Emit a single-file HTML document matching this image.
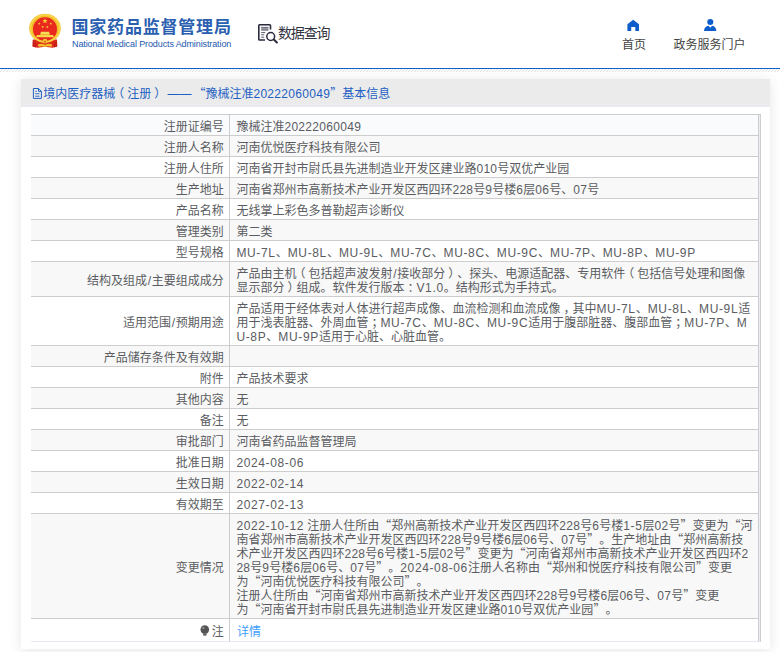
<!DOCTYPE html>
<html lang="zh-CN">
<head>
<meta charset="utf-8">
<title>国家药品监督管理局 数据查询</title>
<style>
*{box-sizing:border-box;margin:0;padding:0}
html,body{width:780px;height:652px;overflow:hidden;background:#fff}
body{text-spacing-trim:space-all;font-family:"Liberation Sans","Noto Sans CJK SC",sans-serif;font-size:12px;color:#444;position:relative}
.q{font-family:"Noto Sans CJK SC",sans-serif;line-height:0}
.hdr{position:absolute;left:0;top:0;width:780px;height:68px;background:#fff}
.blue{position:absolute;left:0;top:67.6px;width:780px;height:1.7px;background:#0f5fc4}
.hatch{position:absolute;left:0;top:69.4px;width:780px;height:3px}
.emblem{position:absolute;left:28px;top:12px;width:34px;height:37px}
.t1{position:absolute;left:71.5px;top:14.5px;font-size:17px;line-height:26px;font-weight:bold;color:#2b5fb0;white-space:nowrap;letter-spacing:.8px}
.t2{position:absolute;left:72px;top:38px;font-size:9px;line-height:12px;color:#2258ae;white-space:nowrap;letter-spacing:-.11px}
.sq{position:absolute;left:257px;top:23px;width:22px;height:21px}
.sqt{position:absolute;left:278px;top:21.5px;font-size:14px;line-height:22px;color:#33333f;white-space:nowrap;letter-spacing:-1.15px}
.nav{position:absolute;top:38.3px;font-size:12px;line-height:14px;color:#444;white-space:nowrap;text-align:center}
.ico{position:absolute}
.card{position:absolute;left:21px;top:79px;width:749px;height:570px;background:#fff;box-shadow:0 2px 12px 0 rgba(0,0,0,.1)}
.ch{position:absolute;left:0;top:0;width:749px;height:28px;background:#ebebeb;border-bottom:1px solid #e8ebf5}
.cht{position:absolute;left:22.3px;top:6.6px;font-size:12px;line-height:16px;color:#1e5fc4;white-space:nowrap}
.doc{position:absolute;left:10px;top:8px;width:11px;height:12px}
table{position:absolute;left:10px;top:35px;width:728px;table-layout:fixed;border-collapse:separate;border-spacing:0;border-top:1px solid #cdcdcd}
td{border-bottom:1px solid #cdcdcd;border-right:1px solid #cdcdcd;padding:4.5px 6px 1.5px 6.4px;line-height:14px;font-size:12px;color:#5a5c61;vertical-align:middle;white-space:nowrap}
td.k{text-align:right;padding:4.5px 5.3px 1.5px 0}
.sl{margin:0 .7px}
.n{letter-spacing:.3px}
.d{letter-spacing:.62px}
.m{letter-spacing:.65px}
.pl{position:relative;left:-3px}
.pr{position:relative;left:3px}
tr.g td{background:#f8f8f8}
tr:last-child td{border-bottom-color:#e6eaf4}
tr.b td{background:#fafbfd}
.edge{position:absolute;left:738px;top:35px;width:2px;height:528px;background:#ebeef5;border-right:1px solid #cdcdcd;border-top:1px solid #cdcdcd}
a{color:#409eff;text-decoration:none}
</style>
</head>
<body>
<div class="hdr">
<svg class="emblem" style="left:25px;top:8px;width:40px;height:45px" viewBox="25 8 40 45">
<path d="M32.9 39.6 L57 39.6 L57.2 46.6 L52.5 47.8 L45 46.8 L37.5 47.8 L32.6 46.6 Z" fill="#dc2a1c"/>
<path d="M32.8 40 L36.5 44 L36 47.4 L32.6 46.6 Z M57 40 L53.5 44 L54 47.4 L57.2 46.6 Z" fill="#c9201a"/>
<ellipse cx="45" cy="28.3" rx="15.8" ry="14.5" fill="#f2bb2a"/>
<ellipse cx="45" cy="28.3" rx="14.6" ry="13.4" fill="none" stroke="#f8d648" stroke-width="1.6"/>
<ellipse cx="45" cy="29.2" rx="12" ry="11.9" fill="#e9281e"/>
<polygon points="45.00,18.20 45.69,20.05 47.66,20.13 46.12,21.36 46.65,23.27 45.00,22.18 43.35,23.27 43.88,21.36 42.34,20.13 44.31,20.05" fill="#f6cf3a"/><polygon points="39.20,22.20 39.55,23.12 40.53,23.17 39.76,23.78 40.02,24.73 39.20,24.19 38.38,24.73 38.64,23.78 37.87,23.17 38.85,23.12" fill="#f6cf3a"/><polygon points="50.80,22.20 51.15,23.12 52.13,23.17 51.36,23.78 51.62,24.73 50.80,24.19 49.98,24.73 50.24,23.78 49.47,23.17 50.45,23.12" fill="#f6cf3a"/><polygon points="42.70,25.60 43.05,26.52 44.03,26.57 43.26,27.18 43.52,28.13 42.70,27.59 41.88,28.13 42.14,27.18 41.37,26.57 42.35,26.52" fill="#f6cf3a"/><polygon points="47.30,25.60 47.65,26.52 48.63,26.57 47.86,27.18 48.12,28.13 47.30,27.59 46.48,28.13 46.74,27.18 45.97,26.57 46.95,26.52" fill="#f6cf3a"/>
<path d="M40 34.4 L41 31.8 L49 31.8 L50 34.4 Z" fill="#f8dc58"/>
<path d="M36 37.3 L37 34.9 L53 34.9 L54 37.3 Z" fill="#f8d84c"/>
<rect x="40.5" y="34.2" width="9" height=".9" fill="#f1c030"/>
<circle cx="45" cy="41.2" r="2.4" fill="#f4c52f"/>
<circle cx="45" cy="41.6" r=".9" fill="#e0401e"/>
<path d="M37.8 44.6 Q41.5 42.8 45 45 Q48.5 42.8 52.2 44.6 L51.4 46.8 Q48 45.4 45 47 Q42 45.4 38.6 46.8 Z" fill="#f2be2c"/>
</svg>
<div class="t1">国家药品监督管理局</div>
<div class="t2">National Medical Products Administration</div>
<svg class="sq" style="left:252px;top:18px;width:40px;height:30px" viewBox="252 18 40 30" fill="none" stroke="#2a2a3c">
<path d="M265 40 H259.6 Q258.8 40 258.8 39.2 V25.5 Q258.8 24.7 259.6 24.7 H269.7 Q270.5 24.7 270.5 25.5 V29.6" stroke-width="1.6"/>
<rect x="261.2" y="27.3" width="7.2" height="3" fill="#9a9aa6" stroke="none"/>
<path d="M261.2 27.4 H268.4 M261.2 30.1 H268.4" stroke-width=".8" stroke="#55556a"/>
<path d="M261.2 32.6 H265.2 M261.2 34.8 H264.2 M261.2 37.2 H264.2" stroke-width=".9" stroke="#44445a"/>
<circle cx="270.7" cy="36.5" r="3.9" stroke-width="1.5" fill="#fff"/>
<path d="M273.8 39.6 L276.9 42.5" stroke-width="2" stroke-linecap="round"/>
</svg>
<div class="sqt">数据查询</div>
<svg class="ico" style="left:615px;top:12px;width:40px;height:25px" viewBox="615 12 40 25"><path d="M633.2 19.8 L639 24.3 V30.9 H635.3 V27.1 H631.2 V30.9 H627.4 V24.3 Z" fill="#0d5ecb"/></svg>
<svg class="ico" style="left:690px;top:12px;width:40px;height:25px" viewBox="690 12 40 25"><circle cx="710.3" cy="22" r="3.05" fill="#0d5ecb"/><path d="M704 31.1 C704 28 705.8 26 708.6 25.7 L710.3 27.7 L712 25.7 C714.8 26 716.3 28 716.3 31.1 Z" fill="#0d5ecb"/></svg>
<div class="nav" style="left:621px;width:26px">首页</div>
<div class="nav" style="left:673px;width:73px">政务服务门户</div>
</div>
<div class="blue"></div>
<svg class="hatch" width="780" height="3" viewBox="0 0 780 3"><defs><pattern id="hp" width="3" height="3" patternUnits="userSpaceOnUse"><path d="M0.5 2.6 L2.3 0.7" stroke="#d6d6d6" stroke-width=".9" stroke-linecap="round" fill="none"/></pattern></defs><rect width="780" height="3" fill="url(#hp)"/></svg>
<div class="card">
<div class="ch"><svg class="doc" style="left:9px;top:7px;width:14px;height:16px" viewBox="30 86 14 16" fill="none" stroke="#1e5fc4" stroke-width="1"><path d="M33.4 88.5 H38.6 L41.4 91.3 V98.4 H33.4 Z M38.5 88.8 V91.4 H41.1"/><path d="M35.2 91.3 H36.8 M35.2 93.7 H39.5 M35.2 96.2 H39.5" stroke-width=".9"/></svg><div class="cht">境内医疗器械<span class="pl">（</span>注册<span class="pr">）</span> <span style="margin-left:.7px;margin-right:2px">——</span><span class="q">“</span>豫械注准<span class="n">20222060049</span><span class="q">”</span>基本信息</div></div>
<table><colgroup><col style="width:199px"><col style="width:529px"></colgroup>
<tr class="b"><td class="k">注册证编号</td><td>豫械注准<span class="n">20222060049</span></td></tr>
<tr class="g"><td class="k">注册人名称</td><td>河南优悦医疗科技有限公司</td></tr>
<tr><td class="k">注册人住所</td><td>河南省开封市尉氏县先进制造业开发区建业路<span class="n">010</span>号双优产业园</td></tr>
<tr class="g"><td class="k">生产地址</td><td>河南省郑州市高新技术产业开发区西四环<span class="n">228</span>号<span class="n">9</span>号楼<span class="n">6</span>层<span class="n">06</span>号、<span class="n">07</span>号</td></tr>
<tr><td class="k">产品名称</td><td>无线掌上彩色多普勒超声诊断仪</td></tr>
<tr class="g"><td class="k">管理类别</td><td>第二类</td></tr>
<tr><td class="k">型号规格</td><td><span class="m">MU-7L</span>、<span class="m">MU-8L</span>、<span class="m">MU-9L</span>、<span class="m">MU-7C</span>、<span class="m">MU-8C</span>、<span class="m">MU-9C</span>、<span class="m">MU-7P</span>、<span class="m">MU-8P</span>、<span class="m">MU-9P</span></td></tr>
<tr class="g"><td class="k">结构及组成<span class="sl">/</span>主要组成成分</td><td>产品由主机<span class="pl">（</span>包括超声波发射<span class="sl">/</span>接收部分<span class="pr">）</span>、探头、电源适配器、专用软件<span class="pl">（</span>包括信号处理和图像<br>显示部分<span class="pr">）</span>组成。软件发行版本<span class="pr">：</span><span class="m">V1.0</span>。结构形式为手持式。</td></tr>
<tr><td class="k">适用范围<span class="sl">/</span>预期用途</td><td>产品适用于经体表对人体进行超声成像、血流检测和血流成像<span class="pr">，</span>其中<span class="m">MU-7L</span>、<span class="m">MU-8L</span>、<span class="m">MU-9L</span>适<br>用于浅表脏器、外周血管<span class="pr">；</span><span class="m">MU-7C</span>、<span class="m">MU-8C</span>、<span class="m">MU-9C</span>适用于腹部脏器、腹部血管<span class="pr">；</span><span class="m">MU-7P</span>、<span class="m">M</span><br><span class="m">U-8P</span>、<span class="m">MU-9P</span>适用于心脏、心脏血管。</td></tr>
<tr class="g"><td class="k">产品储存条件及有效期</td><td></td></tr>
<tr><td class="k">附件</td><td>产品技术要求</td></tr>
<tr class="g"><td class="k">其他内容</td><td>无</td></tr>
<tr><td class="k">备注</td><td>无</td></tr>
<tr class="g"><td class="k">审批部门</td><td>河南省药品监督管理局</td></tr>
<tr><td class="k">批准日期</td><td><span class="d">2024-08-06</span></td></tr>
<tr class="g"><td class="k">生效日期</td><td><span class="d">2022-02-14</span></td></tr>
<tr><td class="k">有效期至</td><td><span class="d">2027-02-13</span></td></tr>
<tr class="g"><td class="k">变更情况</td><td><span class="d">2022-10-12</span> 注册人住所由<span class="q">“</span>郑州高新技术产业开发区西四环<span class="n">228</span>号<span class="n">6</span>号楼<span class="d">1-5</span>层<span class="n">02</span>号<span class="q">”</span>变更为<span class="q">“</span>河<br>南省郑州市高新技术产业开发区西四环<span class="n">228</span>号<span class="n">9</span>号楼<span class="n">6</span>层<span class="n">06</span>号、<span class="n">07</span>号<span class="q">”</span>。生产地址由<span class="q">“</span>郑州高新技<br>术产业开发区西四环<span class="n">228</span>号<span class="n">6</span>号楼<span class="d">1-5</span>层<span class="n">02</span>号<span class="q">”</span>变更为<span class="q">“</span>河南省郑州市高新技术产业开发区西四环<span class="n">2</span><br><span class="n">28</span>号<span class="n">9</span>号楼<span class="n">6</span>层<span class="n">06</span>号、<span class="n">07</span>号<span class="q">”</span>。<span class="d">2024-08-06</span>注册人名称由<span class="q">“</span>郑州和悦医疗科技有限公司<span class="q">”</span>变更<br>为<span class="q">“</span>河南优悦医疗科技有限公司<span class="q">”</span>。<br>注册人住所由<span class="q">“</span>河南省郑州市高新技术产业开发区西四环<span class="n">228</span>号<span class="n">9</span>号楼<span class="n">6</span>层<span class="n">06</span>号、<span class="n">07</span>号<span class="q">”</span>变更<br>为<span class="q">“</span>河南省开封市尉氏县先进制造业开发区建业路<span class="n">010</span>号双优产业园<span class="q">”</span>。</td></tr>
<tr><td class="k" style="height:23px;padding-top:5px;padding-bottom:1px">注</td><td style="padding-top:5px;padding-bottom:1px;padding-left:7px"><a>详情</a></td></tr>
</table>
<svg style="position:absolute;left:178.4px;top:544.2px;width:12px;height:14px" viewBox="199 623 12 14"><circle cx="204.8" cy="629.6" r="4.3" fill="#555"/><rect x="203" y="633.2" width="3.6" height="2.6" rx=".8" fill="#6a6a6a"/><circle cx="203.4" cy="628" r="1.1" fill="#9a9a9a"/></svg>
<div class="edge"></div>
</div>
</body>
</html>
